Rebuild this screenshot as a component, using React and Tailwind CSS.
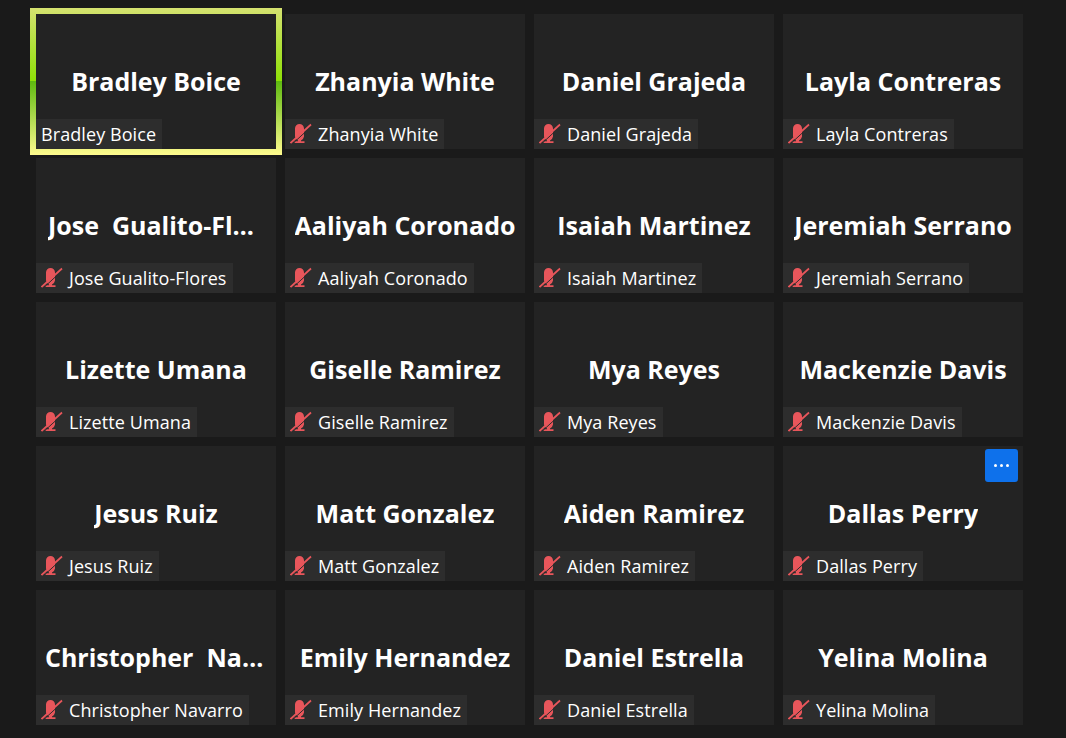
const people = [
  { name: "Bradley Boice", active: true },
  { name: "Zhanyia White" },
  { name: "Daniel Grajeda" },
  { name: "Layla Contreras" },
  { name: "Jose  Gualito-Flores", label: "Jose Gualito-Flores", narrow: true },
  { name: "Aaliyah Coronado" },
  { name: "Isaiah Martinez" },
  { name: "Jeremiah Serrano" },
  { name: "Lizette Umana" },
  { name: "Giselle Ramirez" },
  { name: "Mya Reyes" },
  { name: "Mackenzie Davis" },
  { name: "Jesus Ruiz" },
  { name: "Matt Gonzalez" },
  { name: "Aiden Ramirez" },
  { name: "Dallas Perry", more: true },
  { name: "Christopher  Navarro", label: "Christopher Navarro" },
  { name: "Emily Hernandez" },
  { name: "Daniel Estrella" },
  { name: "Yelina Molina" },
];

function MutedMic() {
  return (
    <svg width="22" height="22" viewBox="0 0 22 22" className="shrink-0">
      <path
        d="M5 5.5a4.5 4.5 0 0 1 9 0v8a5 5 0 0 1-3 3.9v0.8h3.5v1.8H4.5v-1.8H8v-0.8a5 5 0 0 1-3-3.9z"
        fill="#e8565b"
      />
      <path d="M22 3 L2 21.2" stroke="#2d2d2d" strokeWidth="1" />
      <path d="M21 1.5 L0.5 20" stroke="#e8565b" strokeWidth="1.7" />
    </svg>
  );
}

function Tile({ person }) {
  return (
    <div className="relative">
      {person.active && (
        <div className="absolute -inset-[6px] bg-[linear-gradient(180deg,#d5e270_0%,#8ee006_50%,#5fba10_50%,#fffb8e_100%)]" />
      )}
      <div className={`relative h-[135px] bg-[#232323] flex items-center justify-center ${person.narrow ? "px-[12px]" : "px-[9px]"}`}>
        <div className="truncate whitespace-pre text-[25px] font-bold text-white leading-[34px] -mt-[1px]">
          {person.name}
        </div>
        <div className="absolute left-0 bottom-0 h-[30px] bg-[#2d2d2d] flex items-center pl-[5px] pr-[6px] gap-[6px] text-[18px] text-white tracking-[0.08px]">
          {!person.active && <MutedMic />}
          <span>{person.label || person.name}</span>
        </div>
        {person.more && (
          <div className="absolute top-[3px] right-[5px] w-[33px] h-[33px] rounded-[3px] bg-[#0e71eb] flex items-center justify-center gap-[3px]">
            <span className="w-[3px] h-[3px] rounded-full bg-white" />
            <span className="w-[3px] h-[3px] rounded-full bg-white" />
            <span className="w-[3px] h-[3px] rounded-full bg-white" />
          </div>
        )}
      </div>
    </div>
  );
}

export default function App() {
  return (
    <div className="w-[1066px] h-[738px] overflow-hidden bg-[#1a1a1a] pt-[14px] pl-[36px] font-['Open_Sans','Noto_Sans',sans-serif]">
      <div className="grid grid-cols-[repeat(4,240px)] auto-rows-[135px] gap-[9px]">
        {people.map((person) => (
          <Tile key={person.name} person={person} />
        ))}
      </div>
    </div>
  );
}
